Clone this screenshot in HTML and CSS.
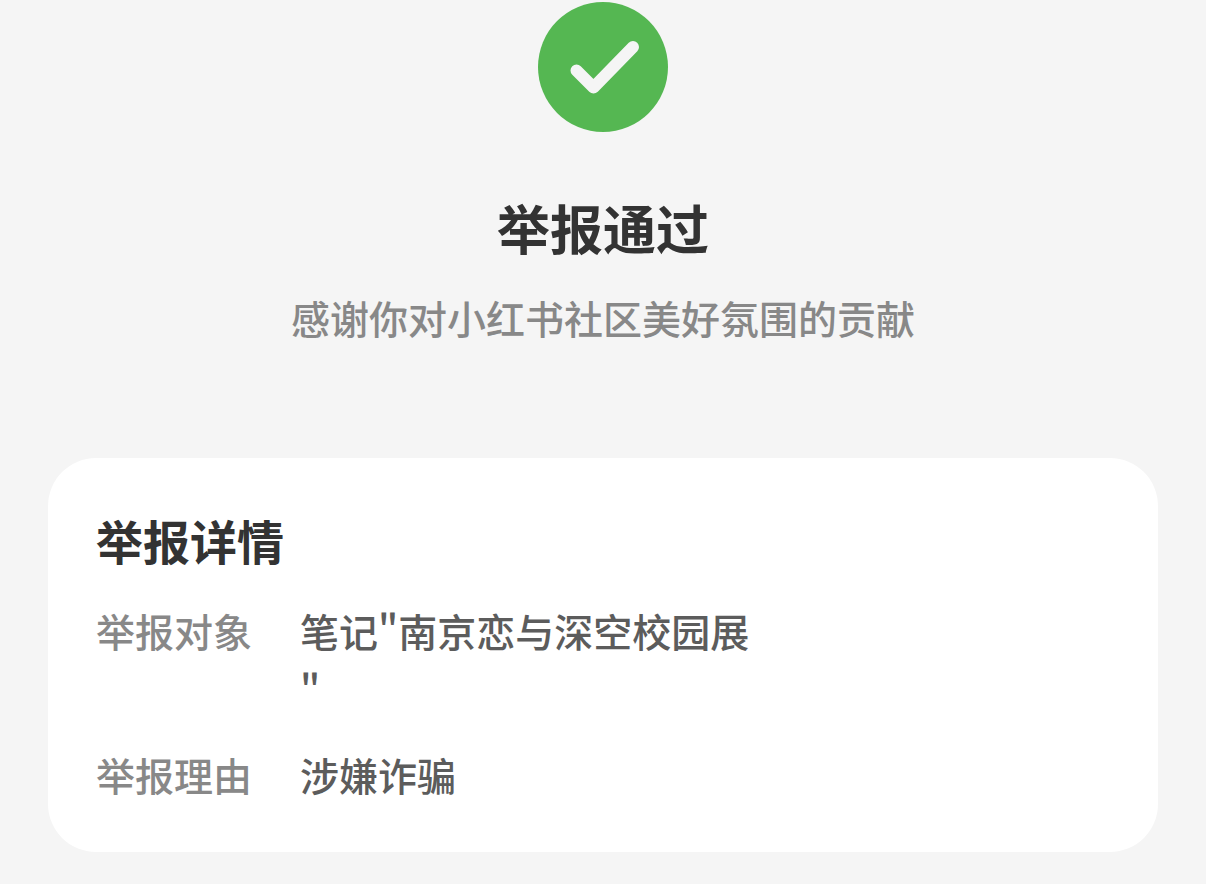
FILE: index.html
```html
<!DOCTYPE html>
<html lang="zh-CN">
<head>
<meta charset="utf-8">
<meta name="viewport" content="width=device-width, initial-scale=1">
<title>举报通过</title>
<link rel="stylesheet" href="styles.css">
</head>
<body>
<main class="page">
  <header class="result">
    <svg class="result-icon" viewBox="0 0 130 130" aria-hidden="true">
      <circle cx="65" cy="65" r="65" fill="#55b752"/>
      <path d="M38.500 68.500L55.500 85.500L95 45" fill="none" stroke="#f5f5f5" stroke-width="12" stroke-linecap="round" stroke-linejoin="round"/>
    </svg>
    <h1 class="result-title">举报通过</h1>
    <p class="result-note">感谢你对小红书社区美好氛围的贡献</p>
  </header>
  <section class="card">
    <h2 class="card-title">举报详情</h2>
    <dl class="details">
      <dt class="label">举报对象</dt>
      <dd class="value">笔记"南京恋与深空校园展<br>"</dd>
      <dt class="label">举报理由</dt>
      <dd class="value">涉嫌诈骗</dd>
    </dl>
  </section>
</main>
</body>
</html>
```
FILE: styles.css
```css
body {
  margin: 0;
  background: #f5f5f5;
  color: #333;
  font-family: "Noto Sans CJK SC", sans-serif;
}

.page {
  padding: 2px 48px 24px;
}

.result {
  display: flex;
  flex-direction: column;
  align-items: center;
  margin-bottom: 112px;
}

.result-icon {
  width: 130px;
  height: 130px;
}

.result-title {
  margin: 56px 0 22px;
  font-size: 53px;
  line-height: 78px;
  font-weight: 700;
}

.result-note {
  margin: 0;
  color: #888;
  font-size: 39px;
  line-height: 58px;
  font-weight: 500;
}

.card {
  padding: 48px;
  border-radius: 48px;
  background: #fff;
}

.card-title {
  margin: 0 0 26px;
  font-size: 47px;
  line-height: 68px;
  font-weight: 700;
}

.details {
  display: grid;
  grid-template-columns: max-content 1fr;
  gap: 24px 48px;
  margin: 0;
  font-size: 39px;
  line-height: 60px;
  font-weight: 500;
}

.label {
  color: #888;
}

.value {
  margin: 0;
  color: #5c5c5c;
}
```
